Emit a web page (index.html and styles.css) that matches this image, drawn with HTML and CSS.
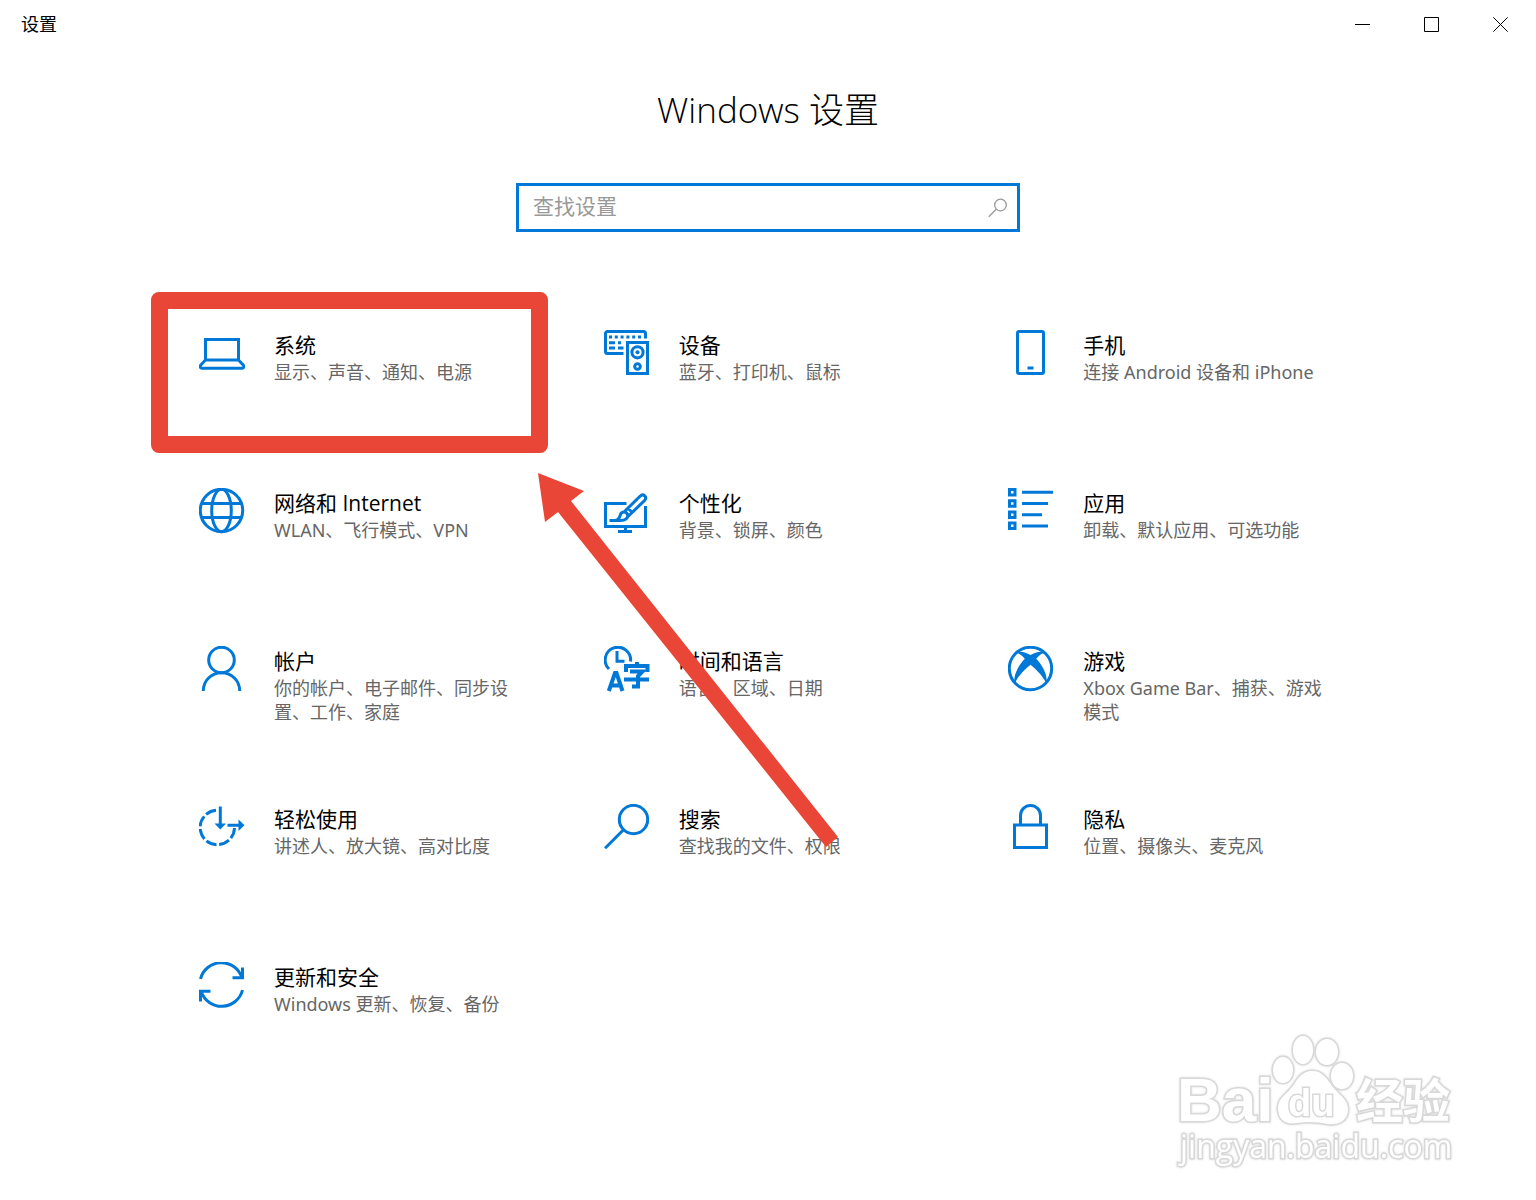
FILE: index.html
```
<!DOCTYPE html>
<html lang="zh-CN">
<head>
    <meta charset="UTF-8">
    <meta name="viewport" content="width=device-width, initial-scale=1.0">
    <title>设置</title>
    <link rel="stylesheet" href="styles.css">
</head>
<body>
    <!-- 标题栏 -->
    <header class="titlebar">
        <span class="titlebar-text">设置</span>
        <div class="window-btns">
            <button class="window-btn" aria-label="最小化">
                <svg width="15" height="15" viewBox="0 0 15 15"><path d="M0 7.5h15"/></svg>
            </button>
            <button class="window-btn" aria-label="最大化">
                <svg width="15" height="15" viewBox="0 0 15 15"><path d="M.5.5h14v14H.5z"/></svg>
            </button>
            <button class="window-btn" aria-label="关闭">
                <svg width="15" height="15" viewBox="0 0 15 15"><path d="M.3.3l14.4 14.4M14.7.3L.3 14.7"/></svg>
            </button>
        </div>
    </header>

    <main class="content">
        <h1>Windows 设置</h1>

        <form class="search" role="search">
            <input class="search-input" type="search" placeholder="查找设置" aria-label="查找设置">
            <button class="search-btn" type="button" aria-label="搜索">
                <svg width="20" height="20" viewBox="0 0 20 20"><circle cx="12.5" cy="7" r="5.8"/><path d="M8.2 11.2L.8 18.8"/></svg>
            </button>
        </form>

        <nav class="grid">
            <a class="tile" href="#system">
                <svg class="icon" viewBox="0 0 46 46"><path d="M6.500 9.500h33v20.500h-33zM6.500 30L1.800 35c-1.100 1.200-.6 3.300 1 3.300h40.400c1.600 0 2.100-2.100 1-3.300L39.500 30"/></svg>
                <div class="tile-text">
                    <h2>系统</h2>
                    <p>显示、声音、通知、电源</p>
                </div>
            </a>
            <a class="tile" href="#devices">
                <svg class="icon" viewBox="0 0 46 46">
                    <path d="M19.500 23.500H3.500a2 2 0 0 1-2-2V3.500a2 2 0 0 1 2-2h36a2 2 0 0 1 2 2V8.500"/>
                    <path d="M5 7h3M10.800 7h3M16.600 7h3M22.400 7h3M28.200 7h3M34 7h3M5 12.700h6M14 12.700h3M5 18h6M14 18h5.500"/>
                    <path d="M23.500 12.500h20v31h-20z"/>
                    <circle cx="33.500" cy="22.300" r="5.600"/>
                    <circle class="solid" cx="33.500" cy="22.300" r="2"/>
                    <circle cx="33.500" cy="36.500" r="2.800"/>
                </svg>
                <div class="tile-text">
                    <h2>设备</h2>
                    <p>蓝牙、打印机、鼠标</p>
                </div>
            </a>
            <a class="tile" href="#phone">
                <svg class="icon" viewBox="0 0 46 46"><rect x="9.500" y="1.500" width="26" height="42" rx="1.500"/><path d="M19.500 38h6"/></svg>
                <div class="tile-text">
                    <h2>手机</h2>
                    <p>连接 Android 设备和 iPhone</p>
                </div>
            </a>
            <a class="tile" href="#network">
                <svg class="icon" viewBox="0 0 46 46"><circle cx="22.500" cy="22.500" r="21.200"/><ellipse cx="22.500" cy="22.500" rx="9.800" ry="21.200"/><path d="M3 15.500h39M3 29.500h39"/></svg>
                <div class="tile-text">
                    <h2>网络和 Internet</h2>
                    <p>WLAN、飞行模式、VPN</p>
                </div>
            </a>
            <a class="tile" href="#personalization">
                <svg class="icon" viewBox="0 0 46 46">
                    <path d="M22.500 15.500H1.500v23h40V18M21.500 39v4M14 43.500h14"/>
                    <path d="M5.500 32.500h11c5 0 8-2.500 7-6-1-3.500-6-3.500-7 0-.8 3-2 5.300-5 6M19.500 24.500L36 8.300c3.300-3.300 7.700 .7 4.500 4.200L24 28.500M24 20.500l5 4.500"/>
                </svg>
                <div class="tile-text">
                    <h2>个性化</h2>
                    <p>背景、锁屏、颜色</p>
                </div>
            </a>
            <a class="tile" href="#apps">
                <svg class="icon" viewBox="0 0 46 46">
                    <path d="M1.500 1.500h5.500v5.500H1.500zM1.500 12.700h5.500v5.500H1.500zM1.500 23.900h5.500v5.500H1.500zM1.500 35.100h5.500v5.500H1.500z"/>
                    <path d="M14 4.200h31M14 15.500h26M14 26.700h20M14 38h26"/>
                </svg>
                <div class="tile-text">
                    <h2>应用</h2>
                    <p>卸载、默认应用、可选功能</p>
                </div>
            </a>
            <a class="tile" href="#accounts">
                <svg class="icon" viewBox="0 0 46 46"><circle cx="22.500" cy="14" r="12.800"/><path d="M4.300 45c0-10.500 8-18.200 18.200-18.200S40.700 34.500 40.700 45"/></svg>
                <div class="tile-text">
                    <h2>帐户</h2>
                    <p>你的帐户、电子邮件、同步设置、工作、家庭</p>
                </div>
            </a>
            <a class="tile" href="#time">
                <svg class="icon" viewBox="0 0 46 46">
                    <path d="M5 23A12.700 12.700 0 1 1 26.500 15.500M13 5v10.300h7.500"/>
                    <g class="bold">
                        <path d="M4.800 45L11 27h1.500L18.500 45M7 39.500h9.500"/>
                        <path d="M22 26v-6h21.500v6M33 16v4M26 25.500h12.500L34 30v10.500h-6M20 33.500h25"/>
                    </g>
                </svg>
                <div class="tile-text">
                    <h2>时间和语言</h2>
                    <p>语言、区域、日期</p>
                </div>
            </a>
            <a class="tile" href="#gaming">
                <svg class="icon" viewBox="0 0 46 46">
                    <circle cx="22.500" cy="22.500" r="21.200"/>
                    <path class="solid" d="M7.500 6.800c4.500-2.300 10-.8 15 2.200 5-3 10.500-4.500 15-2.200-3.500.2-6.500 2.700-9.300 6C34.500 19.500 40 29 38.500 38 36 31.500 29 24 22.500 18.800 16 24 9 31.500 6.500 38 5 29 10.500 19.500 16.800 12.800 14 9.500 11 7 7.500 6.800z"/>
                </svg>
                <div class="tile-text">
                    <h2>游戏</h2>
                    <p>Xbox Game Bar、捕获、游戏模式</p>
                </div>
            </a>
            <a class="tile" href="#ease">
                <svg class="icon" viewBox="0 0 46 46">
                    <path class="dashes" pathLength="58" d="M17 6.300A17.200 17.200 0 1 0 35.500 24"/>
                    <path d="M21.300 2.500v19M28.500 21.300h13"/>
                    <path class="solid" d="M15.500 19.500h11.600l-5.800 6zM39.500 15.500v11.600l6-5.800z"/>
                </svg>
                <div class="tile-text">
                    <h2>轻松使用</h2>
                    <p>讲述人、放大镜、高对比度</p>
                </div>
            </a>
            <a class="tile" href="#search">
                <svg class="icon" viewBox="0 0 46 46"><circle cx="29.500" cy="15.500" r="14.200"/><path d="M19.500 25.800L1 44.300"/></svg>
                <div class="tile-text">
                    <h2>搜索</h2>
                    <p>查找我的文件、权限</p>
                </div>
            </a>
            <a class="tile" href="#privacy">
                <svg class="icon" viewBox="0 0 46 46"><path d="M6.500 21h32v22.500h-32zM12.500 21v-9.500a10 10 0 0 1 20 0V21"/></svg>
                <div class="tile-text">
                    <h2>隐私</h2>
                    <p>位置、摄像头、麦克风</p>
                </div>
            </a>
            <a class="tile" href="#update">
                <svg class="icon" viewBox="0 0 46 46">
                    <path d="M1.500 17A21.500 21.500 0 0 1 42.800 15.500M43.500 28A21.500 21.500 0 0 1 2.200 29.500"/>
                    <path d="M43.500 5.500v10.300H33.500M1.500 39.500V29.300H11.500"/>
                </svg>
                <div class="tile-text">
                    <h2>更新和安全</h2>
                    <p>Windows 更新、恢复、备份</p>
                </div>
            </a>

            <!-- 标注：红框和箭头 -->
            <div class="mark-box"></div>
            <svg class="mark-arrow" width="302" height="376" viewBox="0 0 302 376">
                <path d="M0 0L46 18 33 28 300 364 288 374 20 39 7 49z"/>
            </svg>
        </nav>
    </main>

    <!-- 水印 -->
    <svg class="watermark" width="290" height="144" viewBox="0 0 290 144">
        <text class="wm-logo" x="6" y="91">Bai</text>
        <ellipse cx="112" cy="40" rx="10" ry="13"/>
        <ellipse cx="132" cy="20" rx="10" ry="14"/>
        <ellipse cx="156" cy="22" rx="11" ry="13"/>
        <ellipse cx="171" cy="46" rx="11" ry="13"/>
        <path d="M141 41c11 0 15 8 20 15 6 8 16 13 16 23 0 13-11 16-20 15-11-2-20-3-31-1-11 2-19-3-19-15 0-10 9-14 15-22 5-8 9-15 19-15z"/>
        <text class="wm-du" x="117" y="86">du</text>
        <text class="wm-cn" x="185" y="88">经验</text>
        <text class="wm-url" x="9" y="128">jingyan.baidu.com</text>
    </svg>
</body>
</html>
```
FILE: styles.css
```
* {
    box-sizing: border-box;
}

body {
    position: relative;
    margin: 0;
    min-height: 100vh;
    background: #fff;
    color: #000;
    font-family: "Open Sans", "Noto Sans CJK SC", sans-serif;
    font-size: 18px;
}

h1, h2, p {
    margin: 0;
}

svg {
    display: block;
    fill: none;
}

button {
    border: 0;
    padding: 0;
    background: none;
}

/* 标题栏 */
.titlebar {
    display: flex;
    justify-content: space-between;
    align-items: center;
    height: 48px;
    padding: 0 1px 0 21px;
}

.titlebar-text {
    padding-bottom: 2px;
}

.window-btns {
    display: flex;
}

.window-btn {
    display: flex;
    align-items: center;
    justify-content: center;
    width: 69px;
    height: 48px;
}

.window-btn svg {
    stroke: #000;
}

/* 标题和搜索框 */
.content {
    padding: 38px 24px 80px;
}

h1 {
    font-size: 35px;
    font-weight: 300;
    line-height: 48px;
    text-align: center;
}

.search {
    display: flex;
    align-items: center;
    width: 100%;
    max-width: 504px;
    height: 49px;
    margin: 49px auto 0;
    padding: 0 9px 0 14px;
    border: 3px solid #0078d7;
}

.search-input {
    flex: 1;
    min-width: 0;
    border: 0;
    padding: 0 0 4px;
    outline: 0;
    background: none;
    font: inherit;
    font-size: 21px;
    line-height: 32px;
}

.search-input::placeholder {
    color: #999;
}

.search-btn svg {
    stroke: #999;
    stroke-width: 1.3;
}

/* 设置分类 */
.grid {
    position: relative;
    display: grid;
    grid-template-columns: repeat(3, 1fr);
    grid-auto-rows: minmax(158px, auto);
    max-width: 1214px;
    margin: 60px auto 0;
}

.tile {
    display: flex;
    align-items: flex-start;
    gap: 29px;
    padding: 38px 40px 0 38px;
    color: inherit;
    text-decoration: none;
}

.icon {
    flex: none;
    width: 46px;
    height: 46px;
    stroke: #0078d7;
    stroke-width: 3;
}

.icon .solid {
    fill: #0078d7;
    stroke: none;
}

.icon .bold {
    stroke-width: 4;
}

.icon .dashes {
    stroke-dasharray: 8 2;
}

.tile h2 {
    font-size: 21px;
    font-weight: 400;
    line-height: 30px;
}

.tile p {
    color: #666;
    font-family: "Noto Sans", "Noto Sans CJK SC", sans-serif;
    line-height: 24px;
}

/* 标注 */
.mark-box {
    position: absolute;
    top: 0;
    left: -10px;
    width: 397px;
    height: 161px;
    border: 17px solid #ea4637;
    border-radius: 8px;
}

.mark-arrow {
    position: absolute;
    top: 181px;
    left: 377px;
    fill: #ea4637;
}

/* 水印 */
.watermark {
    position: absolute;
    right: 75px;
    bottom: 26px;
    fill: #fff;
    stroke: #d8d8d8;
    stroke-width: 3;
    paint-order: stroke;
    filter: drop-shadow(0 0 1px #ddd);
}

.wm-logo {
    font: bold 62px "Liberation Sans", sans-serif;
}

.wm-du {
    font: bold 38px "Liberation Sans", sans-serif;
}

.wm-cn {
    font: bold 47px "Noto Sans CJK SC", sans-serif;
}

.wm-url {
    font: 32px "Open Sans", sans-serif;
}
```
